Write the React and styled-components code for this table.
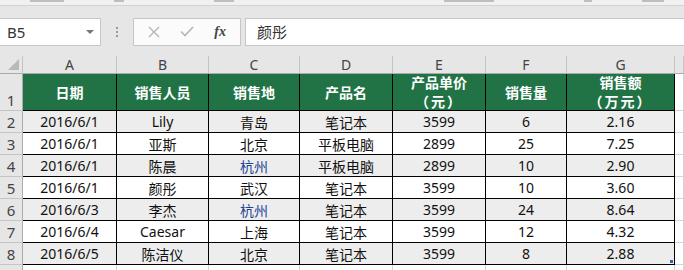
import styled, { createGlobalStyle, css } from "styled-components";

const GlobalStyle = createGlobalStyle`
  html, body {
    margin: 0;
    padding: 0;
    background: #ffffff;
    overflow: hidden;
  }
  body {
    font-family: "Noto Sans", "Noto Sans CJK SC", sans-serif;
  }
`;

const Window = styled.div`
  width: 684px;
  height: 270px;
  overflow: hidden;
  background: #e6e6e6;
`;

/* bottom edge of the ribbon groups, only their label tails peek out */
const Ribbon = styled.div`
  height: 5px;
  background: #f1f1f1;
  border-bottom: 1px solid #d2d2d2;
  display: flex;
  align-items: flex-start;
  padding-left: 30px;
  gap: 40px;
`;

const RibbonTail = styled.i`
  width: ${(p) => p.$w}px;
  height: 2px;
  margin-left: ${(p) => p.$gap || 0}px;
  background: #a8a8a8;
  opacity: 0.7;
`;

const FormulaBar = styled.div`
  display: flex;
  align-items: center;
  height: 48px;
  padding-top: 3px;
  box-sizing: border-box;
`;

const NameBox = styled.div`
  width: 101px;
  height: 28px;
  box-sizing: border-box;
  background: #fff;
  border: 1px solid #c6c6c6;
  border-left: none;
  display: flex;
  align-items: center;
  justify-content: space-between;
  padding: 0 6px 0 7px;
  font-size: 15px;
  color: #333;
`;

const DropArrow = styled.span`
  width: 0;
  height: 0;
  border-left: 4px solid transparent;
  border-right: 4px solid transparent;
  border-top: 4px solid #777;
`;

const Grip = styled.div`
  width: 32px;
  display: flex;
  flex-direction: column;
  align-items: center;
  gap: 2px;

  i {
    width: 2px;
    height: 2px;
    background: #9a9a9a;
  }
`;

const FxBox = styled.div`
  width: 108px;
  height: 28px;
  box-sizing: border-box;
  background: #fbfbfb;
  border: 1px solid #c6c6c6;
  display: flex;
  align-items: center;
  justify-content: space-around;
  padding: 0 4px;
`;

const FxLabel = styled.span`
  font-family: "Liberation Serif", serif;
  font-style: italic;
  font-weight: bold;
  font-size: 14px;
  color: #444;
`;

const Input = styled.div`
  flex: 1;
  margin-left: 4px;
  height: 28px;
  box-sizing: border-box;
  background: #fff;
  border: 1px solid #c6c6c6;
  border-right: none;
  display: flex;
  align-items: center;
  padding-left: 11px;
  font-size: 15px;
  color: #333;
`;

const Grid = styled.div`
  display: grid;
  grid-template-columns: 23px 94px 92px 91px 93px 93px 81px 108px 1fr;
  grid-template-rows: 18px 37px repeat(7, 22px) 22px;
  margin-top: 2px;
  background: #fff;
`;

const ColHead = styled.div`
  background: #e6e6e6;
  border-right: 1px solid #c4c4c4;
  border-bottom: 1px solid #ababab;
  display: flex;
  align-items: center;
  justify-content: center;
  font-size: 14px;
  color: #444;
  line-height: 1;
`;

const Corner = styled(ColHead)`
  position: relative;

  &::after {
    content: "";
    position: absolute;
    right: 3px;
    bottom: 3px;
    width: 0;
    height: 0;
    border-left: 11px solid transparent;
    border-bottom: 11px solid #b9b9b9;
  }
`;

const RowHead = styled.div`
  background: #e6e6e6;
  border-right: 1px solid #ababab;
  border-bottom: 1px solid #c4c4c4;
  display: flex;
  align-items: flex-end;
  justify-content: center;
  font-size: 15px;
  line-height: 20px;
  color: #444;
`;

const Cell = styled.div`
  border-right: 1px solid #000;
  border-bottom: 1px solid #000;
  display: flex;
  align-items: center;
  justify-content: center;
  text-align: center;
  font-size: 14px;
  color: #111;
  background: ${(p) => (p.$alt ? "#ededed" : "#ffffff")};
  ${(p) =>
    p.$head &&
    css`
      background: #217346;
      color: #ffffff;
      font-weight: bold;
      line-height: 19px;
      overflow: hidden;
    `}
  ${(p) =>
    p.$tall &&
    css`
      align-items: flex-start;
      padding-top: 0;
      & > div {
        margin-top: -1px;
      }
    `}
  ${(p) => p.$blue && "color: #1a4494;"}
  ${(p) =>
    p.$handle &&
    css`
      position: relative;
      &::after {
        content: "";
        position: absolute;
        right: 1px;
        bottom: 1px;
        width: 3px;
        height: 3px;
        background: #3a5fb0;
      }
    `}
`;

const Unit = styled.div`
  letter-spacing: 2px;
  font-family: "Noto Sans CJK SC", sans-serif;
`;

const Blank = styled.div`
  border-right: 1px solid #d4d4d4;
  border-bottom: 1px solid #d4d4d4;
  background: #fff;
`;

const columns = ["A", "B", "C", "D", "E", "F", "G"];

const heads = [
  ["日期"],
  ["销售人员"],
  ["销售地"],
  ["产品名"],
  ["产品单价", "（元）"],
  ["销售量"],
  ["销售额", "（万元）"],
];

const rows = [
  ["2016/6/1", "Lily", "青岛", "笔记本", "3599", "6", "2.16"],
  ["2016/6/1", "亚斯", "北京", "平板电脑", "2899", "25", "7.25"],
  ["2016/6/1", "陈晨", "杭州", "平板电脑", "2899", "10", "2.90"],
  ["2016/6/1", "颜彤", "武汉", "笔记本", "3599", "10", "3.60"],
  ["2016/6/3", "李杰", "杭州", "笔记本", "3599", "24", "8.64"],
  ["2016/6/4", "Caesar", "上海", "笔记本", "3599", "12", "4.32"],
  ["2016/6/5", "陈洁仪", "北京", "笔记本", "3599", "8", "2.88"],
];

const CrossIcon = () => (
  <svg width="12" height="12" viewBox="0 0 12 12">
    <path d="M1 1L11 11M11 1L1 11" stroke="#b5b5b5" strokeWidth="1.4" />
  </svg>
);

const CheckIcon = () => (
  <svg width="14" height="11" viewBox="0 0 14 11">
    <path d="M1 5.5L5 9.5L13 1" fill="none" stroke="#b5b5b5" strokeWidth="1.6" />
  </svg>
);

export default function App() {
  return (
    <Window>
      <GlobalStyle />
      <Ribbon>
        <RibbonTail $w={34} />
        <RibbonTail $w={10} $gap={10} />
        <RibbonTail $w={20} $gap={50} />
        <RibbonTail $w={50} $gap={170} />
        <RibbonTail $w={8} $gap={50} />
        <RibbonTail $w={22} $gap={10} />
      </Ribbon>
      <FormulaBar>
        <NameBox>
          B5
          <DropArrow />
        </NameBox>
        <Grip>
          <i />
          <i />
          <i />
        </Grip>
        <FxBox>
          <CrossIcon />
          <CheckIcon />
          <FxLabel>fx</FxLabel>
        </FxBox>
        <Input>颜彤</Input>
      </FormulaBar>

      <Grid>
        <Corner />
        {columns.map((c) => (
          <ColHead key={c}>{c}</ColHead>
        ))}
        <ColHead />

        <RowHead>1</RowHead>
        {heads.map(([title, unit], i) => (
          <Cell key={i} $head $tall={!!unit}>
            <div>
              <div>{title}</div>
              {unit && <Unit>{unit}</Unit>}
            </div>
          </Cell>
        ))}
        <Blank />

        {rows.map((row, r) => (
          <>
            <RowHead key={`h${r}`}>{r + 2}</RowHead>
            {row.map((v, c) => (
              <Cell
                key={`${r}-${c}`}
                $alt={r % 2 === 0}
                $blue={v === "杭州"}
                $handle={r === rows.length - 1 && c === row.length - 1}
              >
                {v}
              </Cell>
            ))}
            <Blank key={`b${r}`} />
          </>
        ))}

        <RowHead>9</RowHead>
        {columns.map((c) => (
          <Blank key={`e${c}`} />
        ))}
        <Blank />
      </Grid>
    </Window>
  );
}
